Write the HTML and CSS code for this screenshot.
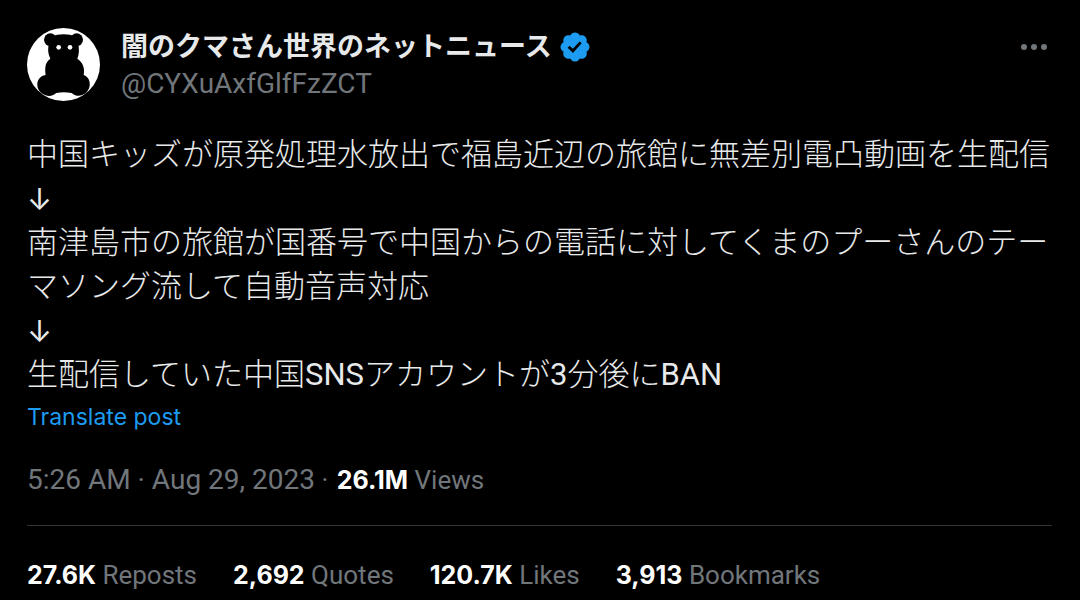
FILE: index.html
```html
<!DOCTYPE html>
<html lang="ja">

<head>
    <meta charset="UTF-8">
    <meta name="viewport" content="width=device-width, initial-scale=1.0">
    <title>Post</title>
    <link rel="stylesheet" href="styles.css">
</head>

<body>
    <article class="post">
        <header class="post-header">
            <a href="#" class="avatar" aria-label="Profile">
                <svg viewBox="0 0 219 219">
                    <clipPath id="avatar-clip">
                        <circle cx="109.5" cy="109.5" r="109.5" />
                    </clipPath>
                    <g clip-path="url(#avatar-clip)">
                        <rect width="219" height="219" fill="#fff" />
                        <circle cx="70" cy="35" r="19" />
                        <circle cx="149" cy="35" r="19" />
                        <path d="M110 19C140 19 150 28 153 46C157 62 157 78 151 92C168 104 174 120 170 141C184 146 190 160 188 174C184 194 168 205 150 203C142 202 138 198 134 195Q110 191 88 195C84 198 78 203 68 204C48 204 32 190 31 172C30 157 38 144 56 141C53 120 54 104 70 92C62 77 62 62 66 46C70 28 80 19 110 19Z" />
                        <circle cx="95" cy="58" r="7" fill="#fff" />
                        <circle cx="129" cy="58" r="7" fill="#fff" />
                    </g>
                </svg>
            </a>
            <div class="author">
                <div class="name-row">
                    <a href="#" class="name">闇のクマさん世界のネットニュース</a>
                    <svg class="verified" viewBox="0 0 22 22">
                        <path d="M20.396 11c-.018-.646-.215-1.275-.57-1.816-.354-.54-.852-.972-1.438-1.246.223-.607.27-1.264.14-1.897-.131-.634-.437-1.218-.882-1.687-.47-.445-1.053-.75-1.687-.882-.633-.13-1.29-.083-1.897.14-.273-.587-.704-1.086-1.245-1.44S11.647 1.62 11 1.604c-.646.017-1.273.213-1.813.568s-.969.854-1.24 1.44c-.608-.223-1.267-.272-1.902-.14-.635.13-1.22.436-1.69.882-.445.47-.749 1.055-.878 1.688-.13.633-.08 1.29.144 1.896-.587.274-1.087.705-1.443 1.245-.356.54-.555 1.17-.574 1.817.02.647.218 1.276.574 1.817.356.54.856.972 1.443 1.245-.224.606-.274 1.263-.144 1.896.13.634.433 1.218.877 1.688.47.443 1.054.747 1.687.878.633.132 1.29.084 1.897-.136.274.586.705 1.084 1.246 1.439.54.354 1.17.551 1.816.569.647-.016 1.276-.213 1.817-.567s.972-.854 1.245-1.44c.604.239 1.266.296 1.903.164.636-.132 1.22-.447 1.68-.907.46-.46.776-1.044.908-1.681s.075-1.299-.165-1.903c.586-.274 1.084-.705 1.439-1.246.354-.54.551-1.17.569-1.816zM9.662 14.85l-3.429-3.428 1.293-1.302 2.072 2.072 4.4-4.794 1.347 1.246z" />
                    </svg>
                </div>
                <a href="#" class="handle">@CYXuAxfGlfFzZCT</a>
            </div>
            <button class="more-btn" type="button" aria-label="More">
                <svg viewBox="0 0 26 6">
                    <circle cx="3" cy="3" r="3" />
                    <circle cx="13" cy="3" r="3" />
                    <circle cx="23" cy="3" r="3" />
                </svg>
            </button>
        </header>

        <div class="post-text">
            <p>中国キッズが原発処理水放出で福島近辺の旅館に無差別電凸動画を生配信</p>
            <p class="arrow">↓</p>
            <p>南津島市の旅館が国番号で中国からの電話に対してくまのプーさんのテーマソング流して自動音声対応</p>
            <p class="arrow">↓</p>
            <p>生配信していた中国<span class="latin">SNS</span>アカウントが<span class="latin">3</span>分後に<span class="latin">BAN</span></p>
        </div>
        <button class="translate-btn" type="button">Translate post</button>

        <div class="meta">
            <a href="#" class="date">5:26 AM · Aug 29, 2023</a> · <strong>26.1M</strong> Views
        </div>

        <div class="stats">
            <a href="#"><strong>27.6K</strong> Reposts</a>
            <a href="#"><strong>2,692</strong> Quotes</a>
            <a href="#"><strong>120.7K</strong> Likes</a>
            <a href="#"><strong>3,913</strong> Bookmarks</a>
        </div>
    </article>
</body>

</html>
```

FILE: styles.css
```css
* {
    box-sizing: border-box;
}

body {
    margin: 0;
    background-color: #000;
    color: #e7e9ea;
    font-family: Roboto, "Noto Sans CJK JP", sans-serif;
}

a {
    color: inherit;
    text-decoration: none;
}

button {
    padding: 0;
    border: none;
    background: none;
    font-family: inherit;
    cursor: pointer;
}

svg {
    display: block;
}

strong {
    color: #fff;
    font-family: Inter, sans-serif;
    font-size: 25px;
    font-weight: 700;
}

.post {
    padding: 28px 28px 0 27px;
}

.post-header {
    display: flex;
    align-items: flex-start;
}

.avatar {
    width: 73px;
    margin-right: 21px;
}

.author {
    flex: 1;
}

.name-row {
    display: flex;
    align-items: center;
    gap: 6px;
    height: 38px;
}

.name {
    font-size: 27px;
    font-weight: 700;
    line-height: 40px;
}

.verified {
    width: 34px;
    height: 34px;
    fill: #1d9bf0;
}

.handle {
    display: block;
    color: #71767b;
    font-size: 28px;
    font-weight: 400;
    line-height: 36px;
}

.more-btn {
    padding: 16px 5px;
}

.more-btn svg {
    width: 26px;
    height: 6px;
    fill: #71767b;
}

.post-text {
    margin-top: 31px;
    font-size: 31px;
    font-weight: 300;
    line-height: 44px;
}

.post-text p {
    margin: 0;
}

.post-text .arrow {
    font-family: Inter, sans-serif;
    font-size: 30px;
    font-weight: 400;
}

.latin {
    font-weight: 400;
}

.translate-btn {
    display: block;
    margin-top: 4px;
    color: #1d9bf0;
    font-family: Inter, sans-serif;
    font-size: 23px;
    line-height: 32px;
}

.meta {
    margin-top: 29px;
    padding-bottom: 27px;
    border-bottom: 1px solid #2f3336;
    color: #71767b;
    font-size: 26px;
    line-height: 36px;
}

.date {
    font-size: 28px;
}

.meta strong {
    margin-left: 2px;
}

.stats {
    display: flex;
    gap: 36px;
    margin-top: 31px;
    color: #71767b;
    font-size: 26px;
    line-height: 36px;
}
```
